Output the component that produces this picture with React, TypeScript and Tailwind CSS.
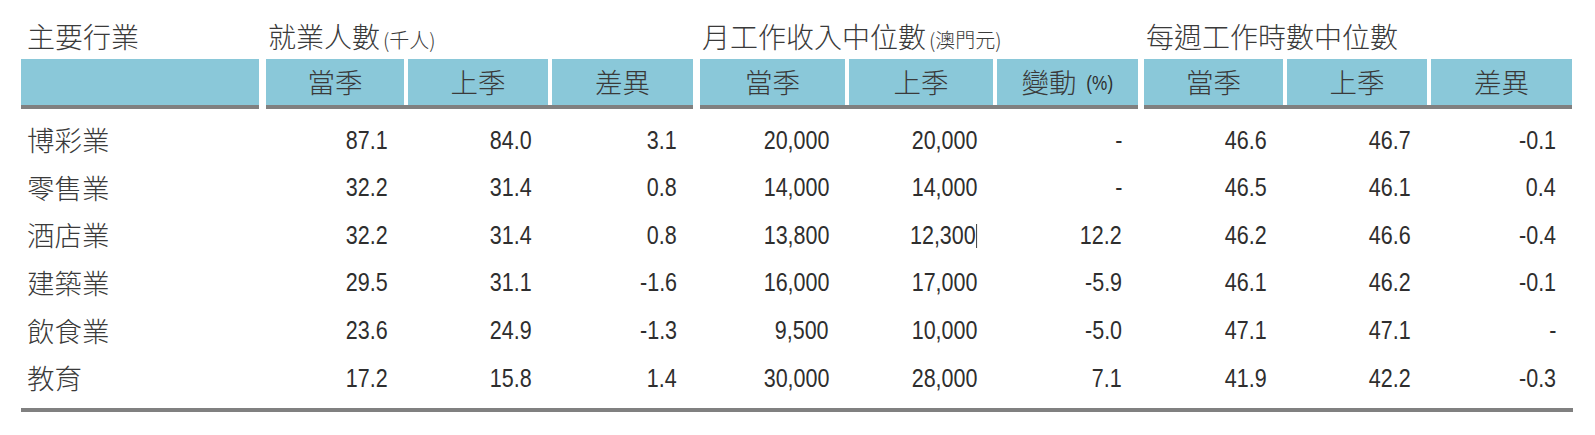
const groups = [
  { title: "就業人數", unit: "(千人)", cols: [138, 140, 141], heads: ["當季", "上季", "差異"] },
  { title: "月工作收入中位數", unit: "(澳門元)", cols: [145, 144, 141], heads: ["當季", "上季", "變動"] },
  { title: "每週工作時數中位數", unit: "", cols: [139, 140, 141], heads: ["當季", "上季", "差異"] },
]

const groupGaps = ["ml-[7px]", "ml-[7px]", "ml-[6px]"]

const rows: { name: string; values: string[] }[] = [
  { name: "博彩業", values: ["87.1", "84.0", "3.1", "20,000", "20,000", "-", "46.6", "46.7", "-0.1"] },
  { name: "零售業", values: ["32.2", "31.4", "0.8", "14,000", "14,000", "-", "46.5", "46.1", "0.4"] },
  { name: "酒店業", values: ["32.2", "31.4", "0.8", "13,800", "12,300", "12.2", "46.2", "46.6", "-0.4"] },
  { name: "建築業", values: ["29.5", "31.1", "-1.6", "16,000", "17,000", "-5.9", "46.1", "46.2", "-0.1"] },
  { name: "飲食業", values: ["23.6", "24.9", "-1.3", "9,500", "10,000", "-5.0", "47.1", "47.1", "-"] },
  { name: "教育", values: ["17.2", "15.8", "1.4", "30,000", "28,000", "7.1", "41.9", "42.2", "-0.3"] },
]

const cjk = "font-['Noto_Sans_CJK_TC','Noto_Sans_CJK_SC',sans-serif] font-light text-[#3a3a3a]"
const num = "font-['Liberation_Sans',Arial,sans-serif] text-[#2e2e2e]"

// narrow figures, as in the printed table
function Num({ children }: { children: React.ReactNode }) {
  return <span className={`inline-block origin-right scale-x-[0.86] ${num}`}>{children}</span>
}

export default function App() {
  return (
    <div className="w-[1595px] h-[435px] bg-white">
      <div className="ml-[21px] w-[1552px]">
        {/* titles */}
        <div className="flex h-[59px]">
          <div className={`w-[238px] pl-[6px] pt-[21px] text-[28px] leading-[30px] ${cjk}`}>主要行業</div>
          {groups.map((g, gi) => (
            <div
              key={g.title}
              className={`${groupGaps[gi]} pl-[2px] pt-[21px] leading-[30px] whitespace-nowrap`}
              style={{ width: g.cols.reduce((a, b) => a + b, 0) + 8 }}
            >
              <span className={`text-[28px] ${cjk}`}>{g.title}</span>
              {g.unit && <span className={`ml-[3px] text-[20px] ${cjk}`}>{g.unit}</span>}
            </div>
          ))}
        </div>

        {/* header bar */}
        <div className="flex">
          <div className="w-[238px] h-[50px] bg-[#8ac8d9] border-b-4 border-[#808080]" />
          {groups.map((g, gi) => (
            <div key={g.title} className={`${groupGaps[gi]} flex gap-1 border-b-4 border-[#808080]`}>
              {g.cols.map((w, ci) => (
                <div
                  key={ci}
                  className={`h-[46px] bg-[#8ac8d9] flex items-center justify-center text-[27.5px] ${cjk}`}
                  style={{ width: w }}
                >
                  {g.heads[ci]}
                  {g.heads[ci] === "變動" && (
                    <span className="ml-[6px] text-[20px]">
                      <Num>(%)</Num>
                    </span>
                  )}
                </div>
              ))}
            </div>
          ))}
        </div>

        {/* body */}
        <div className="mt-[7px]">
          {rows.map((r) => (
            <div key={r.name} className="flex h-[47.6px] items-center">
              <div className={`w-[238px] pl-[6px] text-[27.5px] ${cjk}`}>{r.name}</div>
              {groups.map((g, gi) => (
                <div key={g.title} className={`${groupGaps[gi]} flex gap-1`}>
                  {g.cols.map((w, ci) => {
                    const v = r.values[gi * 3 + ci]
                    return (
                      <div key={ci} className="pr-4 text-right text-[25px]" style={{ width: w }}>
                        <Num>
                          {v}
                          {v === "12,300" && (
                            <span className="inline-block w-px h-[24px] bg-[#222] align-middle ml-px -mt-[2px]" />
                          )}
                        </Num>
                      </div>
                    )
                  })}
                </div>
              ))}
            </div>
          ))}
        </div>

        <div className="mt-[6px] h-1 bg-[#808080]" />
      </div>
    </div>
  )
}
